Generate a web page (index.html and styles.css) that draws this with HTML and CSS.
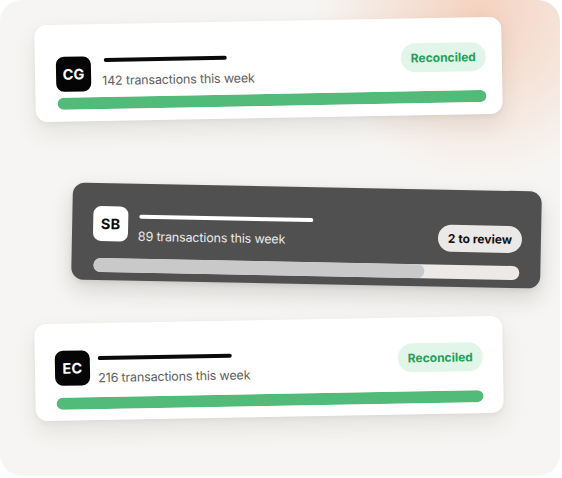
FILE: index.html
```html
<!DOCTYPE html>
<html lang="en">
<head>
<meta charset="utf-8">
<title>Reconciliation</title>
<link rel="stylesheet" href="styles.css">
</head>
<body>
<div class="stage">
  <div class="card card--one">
    <div class="head">
      <div class="who">
        <div class="avatar">CG</div>
        <div class="lines">
          <div class="name-bar"></div>
          <div class="sub">142 transactions this week</div>
        </div>
      </div>
      <span class="badge badge--ok">Reconciled</span>
    </div>
    <div class="track"><div class="fill" style="width:100%"></div></div>
  </div>

  <div class="card card--two card--dark">
    <div class="head">
      <div class="who">
        <div class="avatar">SB</div>
        <div class="lines">
          <div class="name-bar"></div>
          <div class="sub">89 transactions this week</div>
        </div>
      </div>
      <span class="badge badge--review">2 to review</span>
    </div>
    <div class="track"><div class="fill" style="width:77.8%"></div></div>
  </div>

  <div class="card card--three">
    <div class="head">
      <div class="who">
        <div class="avatar">EC</div>
        <div class="lines">
          <div class="name-bar"></div>
          <div class="sub">216 transactions this week</div>
        </div>
      </div>
      <span class="badge badge--ok">Reconciled</span>
    </div>
    <div class="track"><div class="fill" style="width:100%"></div></div>
  </div>
</div>
</body>
</html>
```

FILE: styles.css
```css
html, body {
  margin: 0;
  padding: 0;
  background: #ffffff;
}

body {
  font-family: Inter, "Liberation Sans", Arial, sans-serif;
}

.stage {
  width: 560px;
  height: 476px;
  box-sizing: border-box;
  border-radius: 22px;
  overflow: hidden;
  background:
    radial-gradient(circle at 480px 12px, rgba(244, 198, 174, 0.75) 0px, rgba(244, 205, 184, 0.45) 80px, rgba(246, 230, 220, 0) 165px),
    #f6f5f3;
  padding-top: 21px;
  display: flex;
  flex-direction: column;
  align-items: flex-start;
}

.card {
  --av-top: 7px;
  --lines-top: 9px;
  --bar-gap: 11px;
  --name-w: 123px;
  --name-shift: 2px;
  --sub-top: 11px;
  --badge-top: 0px;
  --badge-h: 29px;
  --bar-h: 12px;
  box-sizing: border-box;
  height: 97px;
  border-radius: 12px;
  background: #ffffff;
  display: flex;
  flex-direction: column;
  box-shadow: 0 10px 22px rgba(70, 55, 40, 0.10), 0 2px 5px rgba(70, 55, 40, 0.06);
  transform-origin: center center;
}

.card--one {
  width: 467px;
  margin-left: 35px;
  padding: 25px 16px 12px 21px;
  transform: rotate(-1.05deg);
}

.card--two {
  width: 469px;
  margin-left: 72px;
  margin-top: 69px;
  padding: 22px 19px 8px 21px;
  transform: rotate(1.1deg);
  --av-top: 1px;
  --lines-top: 9px;
  --bar-gap: 10px;
  --name-w: 174px;
  --name-shift: 1px;
  --sub-top: 10px;
  --badge-top: 13px;
  --badge-h: 27px;
  --bar-h: 14px;
}

.card--three {
  width: 468px;
  margin-left: 35px;
  margin-top: 36px;
  padding: 26px 20px 11px 20px;
  transform: rotate(-1.05deg);
  --av-top: 1px;
  --lines-top: 7px;
  --bar-gap: 8px;
  --name-w: 134px;
  --name-shift: 0px;
  --sub-top: 10px;
  --badge-top: 0px;
}

.card--dark {
  background: #505050;
  box-shadow: 0 10px 22px rgba(40, 35, 30, 0.16), 0 2px 5px rgba(40, 35, 30, 0.08);
}

.head {
  display: flex;
  justify-content: space-between;
  align-items: flex-start;
}

.who {
  display: flex;
  align-items: flex-start;
  gap: var(--bar-gap);
}

.avatar {
  margin-top: var(--av-top);
  width: 35px;
  height: 35px;
  border-radius: 8px;
  background: #050505;
  color: #ffffff;
  font-weight: 700;
  font-size: 14.5px;
  letter-spacing: 0.2px;
  display: flex;
  align-items: center;
  justify-content: center;
  flex: none;
}

.card--dark .avatar {
  background: #ffffff;
  color: #0c0c0c;
}

.lines {
  margin-top: var(--lines-top);
  display: flex;
  flex-direction: column;
}

.name-bar {
  width: var(--name-w);
  height: 4px;
  border-radius: 2px;
  background: #0a0a0a;
  margin-left: var(--name-shift);
}

.card--dark .name-bar {
  background: #ffffff;
}

.sub {
  margin-top: var(--sub-top);
  font-size: 12.5px;
  letter-spacing: -0.15px;
  line-height: 16px;
  color: #5d5d5d;
  white-space: nowrap;
}

.card--dark .sub {
  color: #ececec;
}

.badge {
  margin-top: var(--badge-top);
  height: var(--badge-h);
  line-height: var(--badge-h);
  padding: 0 10px;
  border-radius: 15px;
  font-size: 12px;
  font-weight: 700;
  white-space: nowrap;
}

.badge--ok {
  background: #e2f5e9;
  color: #23a058;
  min-width: 62px;
  text-align: center;
}

.badge--review {
  background: #ebe9e7;
  color: #111111;
  min-width: 62px;
  text-align: center;
}

.track {
  margin-top: auto;
  height: var(--bar-h);
  border-radius: 8px;
  background: #ece9e6;
  margin-left: 1px;
  overflow: hidden;
}

.card--two .track {
  margin-right: 2px;
}

.fill {
  height: 100%;
  border-radius: 8px;
  background: #52bb7a;
}

.card--dark .fill {
  background: #c9c9c9;
}
```
